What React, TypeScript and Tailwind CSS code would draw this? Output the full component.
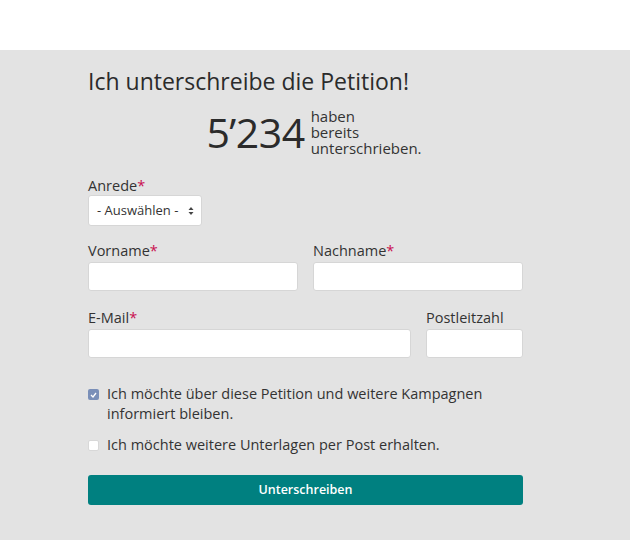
import React from "react";

function Req() {
  return <span className="text-[#c90f50]">*</span>;
}

function Field({
  label,
  required,
  className,
}: {
  label: string;
  required?: boolean;
  className?: string;
}) {
  return (
    <div className={`flex flex-col ${className ?? ""}`}>
      <label className="text-[14.5px] leading-[20px] text-[#333]">
        {label}
        {required ? <Req /> : null}
      </label>
      <input
        type="text"
        className="mt-[1px] h-[29px] w-full rounded-[3px] border border-[#d6d6d6] bg-white px-2 outline-none"
      />
    </div>
  );
}

export default function App() {
  return (
    <div className="min-h-[540px] bg-white font-['Open_Sans',sans-serif] text-[#333]">
      <div className="h-[50px] bg-white" />
      <div className="min-h-[490px] bg-[#e3e3e3] pb-8 pt-[15px]">
        <div className="ml-[88px] w-[435px]">
          <h2 className="text-[23px] leading-[32px] font-normal text-[#2b2b2b]">
            Ich unterschreibe die Petition!
          </h2>

          <div className="mt-[11px] flex items-center justify-center pl-[17px]">
            <span className="text-[41px] leading-[46px] tracking-[-0.5px] text-[#2b2b2b]">5’234</span>
            <span className="ml-[6px] flex flex-col text-[15px] leading-[16px] text-[#333]">
              <span>haben</span>
              <span>bereits</span>
              <span>unterschrieben.</span>
            </span>
          </div>

          <div className="mt-[21px]">
            <label className="block text-[14.5px] leading-[18px] text-[#333]">
              Anrede
              <Req />
            </label>
            <div className="flex h-[31px] w-[114px] items-center justify-between rounded-[3px] border border-[#d6d6d6] bg-white pl-[8px] pr-[7px] text-[13px] text-[#333]">
              <span>- Auswählen -</span>
              <svg width="6" height="10" viewBox="0 0 6 10">
                <path d="M3 1 L5.5 4 H0.5 Z" fill="#444" />
                <path d="M3 9 L5.5 6 H0.5 Z" fill="#444" />
              </svg>
            </div>
          </div>

          <div className="mt-[15px] flex gap-[15px]">
            <Field label="Vorname" required className="w-[210px]" />
            <Field label="Nachname" required className="w-[210px]" />
          </div>

          <div className="mt-[17px] flex gap-[15px]">
            <Field label="E-Mail" required className="w-[323px]" />
            <Field label="Postleitzahl" className="w-[97px]" />
          </div>

          <div className="mt-[26px] flex flex-col gap-[11px] text-[14.5px] leading-[20px] text-[#333]">
            <label className="flex items-start">
              <span className="mt-[5px] flex h-[11px] w-[11px] shrink-0 items-center justify-center rounded-[2px] bg-[#7a8fb8]">
                <svg width="7" height="6" viewBox="0 0 7 6">
                  <path d="M1 3 L3 5 L6 1" stroke="#fff" strokeWidth="1.3" fill="none" />
                </svg>
              </span>
              <span className="ml-[8px]">
                Ich möchte über diese Petition und weitere Kampagnen
                <br />
                informiert bleiben.
              </span>
            </label>
            <label className="flex items-start">
              <span className="mt-[5px] h-[11px] w-[11px] shrink-0 rounded-[2px] border border-[#d8d8d8] bg-white" />
              <span className="ml-[8px]">Ich möchte weitere Unterlagen per Post erhalten.</span>
            </label>
          </div>

          <button className="mt-[20px] h-[30px] w-full rounded-[3px] bg-[#008080] text-[12.5px] font-semibold text-white">
            Unterschreiben
          </button>
        </div>
      </div>
    </div>
  );
}
